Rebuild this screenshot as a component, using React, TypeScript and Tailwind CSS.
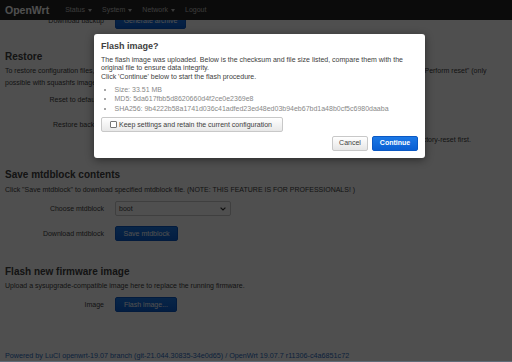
import type { ReactNode } from "react";

const font = "font-['Liberation_Sans',Arial,Helvetica,sans-serif]";

function Caret() {
  return (
    <span className="ml-[3px] inline-block border-x-[2.5px] border-t-[3px] border-x-transparent border-t-current align-middle" />
  );
}

function Row({ label, className = "", children }: { label: string; className?: string; children?: ReactNode }) {
  return (
    <div className={`flex items-center ${className}`}>
      <div className="w-[99px] whitespace-nowrap text-right">{label}</div>
      <div className="ml-[11px] flex items-center">{children}</div>
    </div>
  );
}

function BlueButton({ children, width }: { children: ReactNode; width: string }) {
  return (
    <button className={`h-[15px] ${width} rounded-[2px] border border-[#0b59c4] bg-gradient-to-b from-[#1b78e6] to-[#0a5fd3] text-[7px] text-white`}>
      {children}
    </button>
  );
}

export default function App() {
  return (
    <div className={`relative h-[362px] w-[512px] overflow-hidden bg-white text-[7px] leading-[10px] text-[#404040] ${font}`}>
      {/* page content, scrolled a little under the fixed header */}
      <main className="px-[5px] pt-[14px]">
        <Row label="Download backup" className="h-[14px]">
          <BlueButton width="w-[71px]">Generate archive</BlueButton>
        </Row>

        <h2 className="mt-[23px] text-[10px] font-bold leading-[12px]">Restore</h2>
        <p className="mt-[2px] whitespace-nowrap leading-[12px]">
          To restore configuration files, you can upload a previously generated backup archive here. To reset the firmware to its initial state, click "Perform reset" (only
          <br />
          possible with squashfs images).
        </p>
        <Row label="Reset to defaults:" className="mt-[4px] h-[14px]">
          <button className="h-[14px] w-[60px] rounded-[2px] bg-[#c43c35] text-[7px] text-white">Perform reset</button>
        </Row>
        <Row label="Restore backup:" className="mt-[11px] h-[14px]">
          <button className="h-[14px] w-[70px] rounded-[2px] border border-[#ccc] bg-[#f3f3f3] text-[7px]">Upload archive...</button>
        </Row>
        <p className="mt-[3px] whitespace-nowrap pl-[140px]">
          Custom files (certificates, scripts) may remain on the system. To prevent this, perform a factory-reset first.
        </p>

        <h2 className="mt-[24px] text-[10px] font-bold leading-[12px]">Save mtdblock contents</h2>
        <p className="mt-[3px] leading-[12px]">
          Click "Save mtdblock" to download specified mtdblock file. (NOTE: THIS FEATURE IS FOR PROFESSIONALS! )
        </p>
        <Row label="Choose mtdblock" className="mt-[5px] h-[15px]">
          <div className="flex h-[15px] w-[116px] items-center justify-between rounded-[2px] border border-[#ccc] bg-white pl-[3px] pr-[4px]">
            <span>boot</span>
            <svg width="6" height="4" viewBox="0 0 6 4" className="text-[#333]">
              <path d="M0.6 0.6 L3 3 L5.4 0.6" fill="none" stroke="currentColor" strokeWidth="1.2" />
            </svg>
          </div>
        </Row>
        <Row label="Download mtdblock" className="mt-[10px] h-[15px]">
          <BlueButton width="w-[63px]">Save mtdblock</BlueButton>
        </Row>

        <h2 className="mt-[25px] text-[10px] font-bold leading-[12px]">Flash new firmware image</h2>
        <p className="mt-[2px] leading-[12px]">Upload a sysupgrade-compatible image here to replace the running firmware.</p>
        <Row label="Image" className="mt-[5px] h-[15px]">
          <BlueButton width="w-[62px]">Flash image...</BlueButton>
        </Row>

        <footer className="mt-[39px] whitespace-nowrap text-[7.2px] text-[#2a6cc0]">
          Powered by LuCI openwrt-19.07 branch (git-21.044.30835-34e0d65) / OpenWrt 19.07.7 r11306-c4a6851c72
        </footer>
      </main>

      {/* fixed navbar */}
      <header className="absolute left-0 right-0 top-0 flex h-[20px] items-center bg-[#262626] px-[5px]">
        <span className="text-[10.5px] font-bold text-white">OpenWrt</span>
        <nav className="ml-[16px] flex items-center gap-[10px] text-[7px] text-[#bfbfbf]">
          <span>Status<Caret /></span>
          <span>System<Caret /></span>
          <span>Network<Caret /></span>
          <span>Logout</span>
        </nav>
      </header>

      {/* modal overlay */}
      <div className="absolute inset-0 bg-black/[0.69]" />
      <div className="absolute bottom-0 left-0 right-0 h-[1px] bg-[#5f6b78]" />

      <div className="absolute left-[94px] top-[34px] w-[331px] rounded-[3px] bg-white px-[7px] py-[7px] shadow-[0_2px_8px_rgba(0,0,0,0.45)]">
        <h4 className="text-[9px] font-bold leading-[11px]">Flash image?</h4>
        <p className="mt-[4px] whitespace-nowrap leading-[8.3px]">
          The flash image was uploaded. Below is the checksum and file size listed, compare them with the
          <br />
          original file to ensure data integrity.
          <br />
          Click 'Continue' below to start the flash procedure.
        </p>
        <ul className="mt-[4px] list-disc pl-[13.5px] leading-[9.5px] text-[#888]">
          <li>Size: 33.51 MB</li>
          <li>MD5: 5da617fbb5d8620660d4f2ce0e2369e8</li>
          <li>SHA256: 9b4222b58a1741d036c41adfed23ed48ed03b94eb67bd1a48b0cf5c6980daaba</li>
        </ul>
        <label className="mt-[4px] flex h-[14.5px] w-[182px] items-center gap-[2px] rounded-[2px] border border-[#c8c8c8] bg-gradient-to-b from-white to-[#e8e8e8] pl-[8px] whitespace-nowrap">
          <span className="h-[7px] w-[7px] rounded-[1px] border border-[#767676] bg-white" />
          Keep settings and retain the current configuration
        </label>
        <div className="mt-[4px] flex justify-end gap-[4px]">
          <button className="h-[15px] w-[36px] rounded-[2px] border border-[#c8c8c8] bg-gradient-to-b from-white to-[#e6e6e6] text-[7px] text-[#404040]">
            Cancel
          </button>
          <button className="h-[15px] w-[46px] rounded-[2px] border border-[#0b59c4] bg-gradient-to-b from-[#1b78e6] to-[#0a5fd3] text-[7px] font-bold text-white">
            Continue
          </button>
        </div>
      </div>
    </div>
  );
}
